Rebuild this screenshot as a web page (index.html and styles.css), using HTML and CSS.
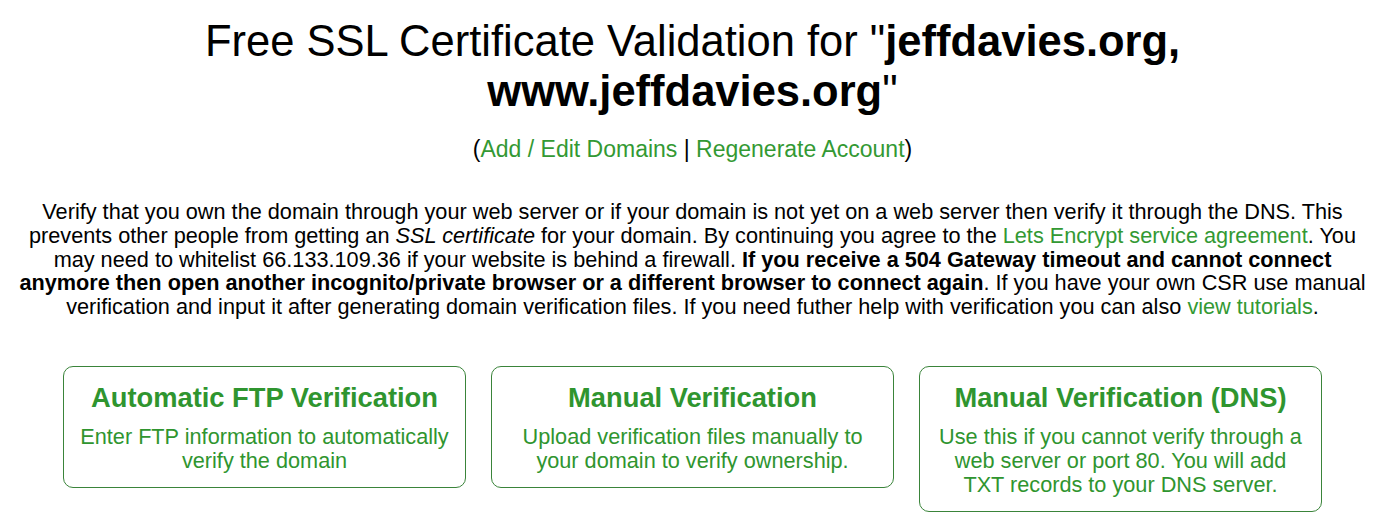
FILE: index.html
```html
<!DOCTYPE html>
<html>
<head>
<meta charset="utf-8">
<link rel="stylesheet" href="styles.css">
</head>
<body>
<div class="page">
  <h1 class="title">Free SSL Certificate Validation for "<b>jeffdavies.org,<br>www.jeffdavies.org</b>"</h1>
  <p class="links">(<a href="#">Add / Edit Domains</a> | <a href="#">Regenerate Account</a>)</p>
  <p class="intro">Verify that you own the domain through your web server or if your domain is not yet on a web server then verify it through the DNS. This<br>prevents other people from getting an <i>SSL certificate</i> for your domain. By continuing you agree to the <a href="#">Lets Encrypt service agreement</a>. You<br>may need to whitelist 66.133.109.36 if your website is behind a firewall. <b>If you receive a 504 Gateway timeout and cannot connect<br>anymore then open another incognito/private browser or a different browser to connect again</b>. If you have your own CSR use manual<br>verification and input it after generating domain verification files. If you need futher help with verification you can also <a href="#">view tutorials</a>.</p>
  <div class="cards">
    <div class="card">
      <h2 class="card-title">Automatic FTP Verification</h2>
      <p class="card-text">Enter FTP information to automatically<br>verify the domain</p>
    </div>
    <div class="card">
      <h2 class="card-title">Manual Verification</h2>
      <p class="card-text">Upload verification files manually to<br>your domain to verify ownership.</p>
    </div>
    <div class="card">
      <h2 class="card-title">Manual Verification (DNS)</h2>
      <p class="card-text">Use this if you cannot verify through a<br>web server or port 80. You will add<br>TXT records to your DNS server.</p>
    </div>
  </div>
</div>
</body>
</html>
```

FILE: styles.css
```css
html, body {
  margin: 0;
  padding: 0;
  background: #fff;
}
body {
  font-family: "Liberation Sans", Arial, sans-serif;
  color: #000;
}
.page {
  width: 1385px;
  display: flex;
  flex-direction: column;
  align-items: center;
}
.title {
  margin: 16px 0 0;
  font-size: 43.5px;
  line-height: 50px;
  font-weight: normal;
  text-align: center;
}
.title b {
  font-weight: bold;
}
.links {
  margin: 20px 0 0;
  font-size: 23px;
  line-height: 26px;
  text-align: center;
}
a {
  color: #339933;
  text-decoration: none;
}
.intro {
  margin: 38px 0 0;
  font-size: 21.7px;
  line-height: 23.8px;
  text-align: center;
}
.cards {
  margin-top: 47px;
  display: flex;
  align-items: flex-start;
  gap: 25px;
}
.card {
  width: 403px;
  box-sizing: border-box;
  border: 1px solid #3a843a;
  border-radius: 10px;
  padding: 14px 10px 14px;
  text-align: center;
  color: #2f952f;
}
.card-title {
  margin: 0;
  font-size: 27.3px;
  line-height: 34px;
  font-weight: bold;
}
.card-text {
  margin: 10px 0 0;
  font-size: 21.7px;
  line-height: 24px;
}
```
